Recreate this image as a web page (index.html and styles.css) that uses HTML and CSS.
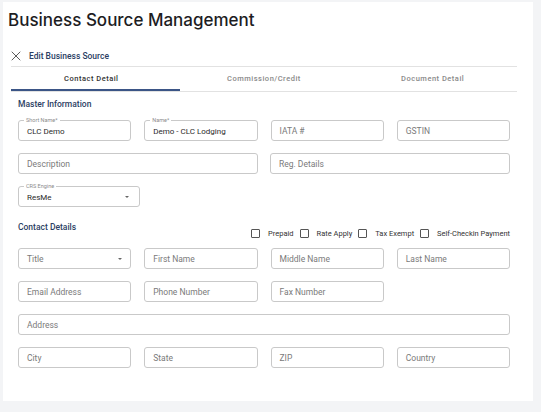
FILE: index.html
```html
<!DOCTYPE html>
<html>
<head>
  <meta charset="UTF-8">
  <title>Business Source Management</title>
  <link rel="stylesheet" href="styles.css">
</head>
<body>
  <div class="card">
    <h1 class="page-title">Business Source Management</h1>

    <div class="panel">
      <div class="panel-head">
        <svg class="close-icon" viewBox="0 0 10 10" width="10" height="10">
          <path d="M1 1 L9 9 M9 1 L1 9" stroke="#4a4a4a" stroke-width="0.9" fill="none" stroke-linecap="round"/>
        </svg>
        <span>Edit Business Source</span>
      </div>

      <div class="tabs">
        <div class="tab active">Contact Detail</div>
        <div class="tab">Commission/Credit</div>
        <div class="tab">Document Detail</div>
      </div>

      <div class="form">
        <div class="section-title">Master Information</div>

        <div class="row cols-4">
          <div class="field filled">
            <span class="legend">Short Name*</span>
            <span class="value">CLC Demo</span>
          </div>
          <div class="field filled">
            <span class="legend">Name*</span>
            <span class="value">Demo - CLC Lodging</span>
          </div>
          <div class="field">IATA #</div>
          <div class="field">GSTIN</div>
        </div>

        <div class="row cols-2">
          <div class="field">Description</div>
          <div class="field">Reg. Details</div>
        </div>

        <div class="row">
          <div class="field filled select crs">
            <span class="legend">CRS Engine</span>
            <span class="value">ResMe</span>
          </div>
        </div>

        <div class="contact-head">
          <div class="section-title">Contact Details</div>
          <div class="checks">
            <label class="check"><span class="box"></span>Prepaid</label>
            <label class="check"><span class="box"></span>Rate Apply</label>
            <label class="check"><span class="box"></span>Tax Exempt</label>
            <label class="check"><span class="box"></span>Self-Checkin Payment</label>
          </div>
        </div>

        <div class="row cols-4">
          <div class="field select">Title</div>
          <div class="field">First Name</div>
          <div class="field">Middle Name</div>
          <div class="field">Last Name</div>
        </div>

        <div class="row cols-4">
          <div class="field">Email Address</div>
          <div class="field">Phone Number</div>
          <div class="field">Fax Number</div>
        </div>

        <div class="row">
          <div class="field">Address</div>
        </div>

        <div class="row cols-4">
          <div class="field">City</div>
          <div class="field">State</div>
          <div class="field">ZIP</div>
          <div class="field">Country</div>
        </div>
      </div>
    </div>
  </div>
</body>
</html>
```

FILE: styles.css
```css
* {
  margin: 0;
  padding: 0;
  box-sizing: border-box;
}

body {
  width: 541px;
  height: 412px;
  background-color: #f3f4f6;
  font-family: Roboto, "Liberation Sans", sans-serif;
  color: #333;
  overflow: hidden;
}

.card {
  width: 530px;
  height: 399px;
  margin: 2px 0 0 3px;
  padding: 7px 16px 0 8px;
  background-color: #fff;
}

.page-title {
  margin-left: -3px;
  font-family: Inter, "Open Sans", sans-serif;
  font-size: 17px;
  line-height: 23px;
  font-weight: 500;
  color: #1d1d1f;
}

.panel-head {
  display: flex;
  align-items: center;
  gap: 8px;
  height: 20px;
  margin-top: 14px;
  font-size: 8.5px;
  font-weight: 500;
  color: #2b3e63;
}

.close-icon {
  display: block;
}

/* Tabs */
.tabs {
  display: grid;
  grid-template-columns: repeat(3, 1fr);
  border-top: 1px solid #e2e2e2;
  border-bottom: 1px solid #e2e2e2;
}

.tab {
  height: 24px;
  display: flex;
  align-items: center;
  justify-content: center;
  font-size: 7.5px;
  font-weight: 500;
  letter-spacing: 0.5px;
  color: #8a8a8a;
  border-bottom: 2px solid transparent;
}

.tab:first-child {
  padding-right: 8px;
}

.tab.active {
  color: #333;
  border-bottom-color: #3b5586;
}

/* Form */
.form {
  padding: 6px 7px 0;
}

.section-title {
  font-size: 8.5px;
  line-height: 12px;
  font-weight: 500;
  color: #2b3e63;
}

.form > .section-title {
  margin-bottom: 10px;
}

.row {
  display: grid;
  grid-template-columns: 1fr;
  gap: 13px;
  margin-bottom: 12px;
}

.row.cols-4 {
  grid-template-columns: repeat(4, 1fr);
}

.row.cols-2 {
  grid-template-columns: 1fr 1fr;
  gap: 12px;
}

.field {
  position: relative;
  height: 21px;
  display: flex;
  align-items: center;
  padding: 0 8px;
  border: 1px solid #c9c9c9;
  border-radius: 3px;
  font-size: 8.5px;
  color: #7a7a7a;
}

.field.filled {
  color: #2a2a2a;
  font-size: 8px;
}

.field.crs {
  width: 122px;
}

.legend {
  position: absolute;
  top: -4px;
  left: 5px;
  padding: 0 2px;
  background-color: #fff;
  font-size: 5.5px;
  line-height: 7px;
  color: #8c8c8c;
}

.value {
  padding-top: 2px;
}

.field.select::after {
  content: "";
  position: absolute;
  right: 8px;
  top: 9px;
  border-left: 2.5px solid transparent;
  border-right: 2.5px solid transparent;
  border-top: 2.5px solid #666;
}

.field.crs::after {
  right: 10px;
}

/* Contact header with checkboxes */
.contact-head {
  display: flex;
  justify-content: space-between;
  align-items: flex-start;
  height: 16px;
  margin-top: 14px;
  margin-bottom: 11px;
}

.checks {
  display: flex;
  align-items: center;
  gap: 6px;
  margin-top: 8px;
}

.check {
  display: flex;
  align-items: center;
  gap: 8px;
  font-size: 7.5px;
  color: #333;
}

.box {
  width: 9px;
  height: 9px;
  border: 1px solid #555;
  border-radius: 1px;
}
```
